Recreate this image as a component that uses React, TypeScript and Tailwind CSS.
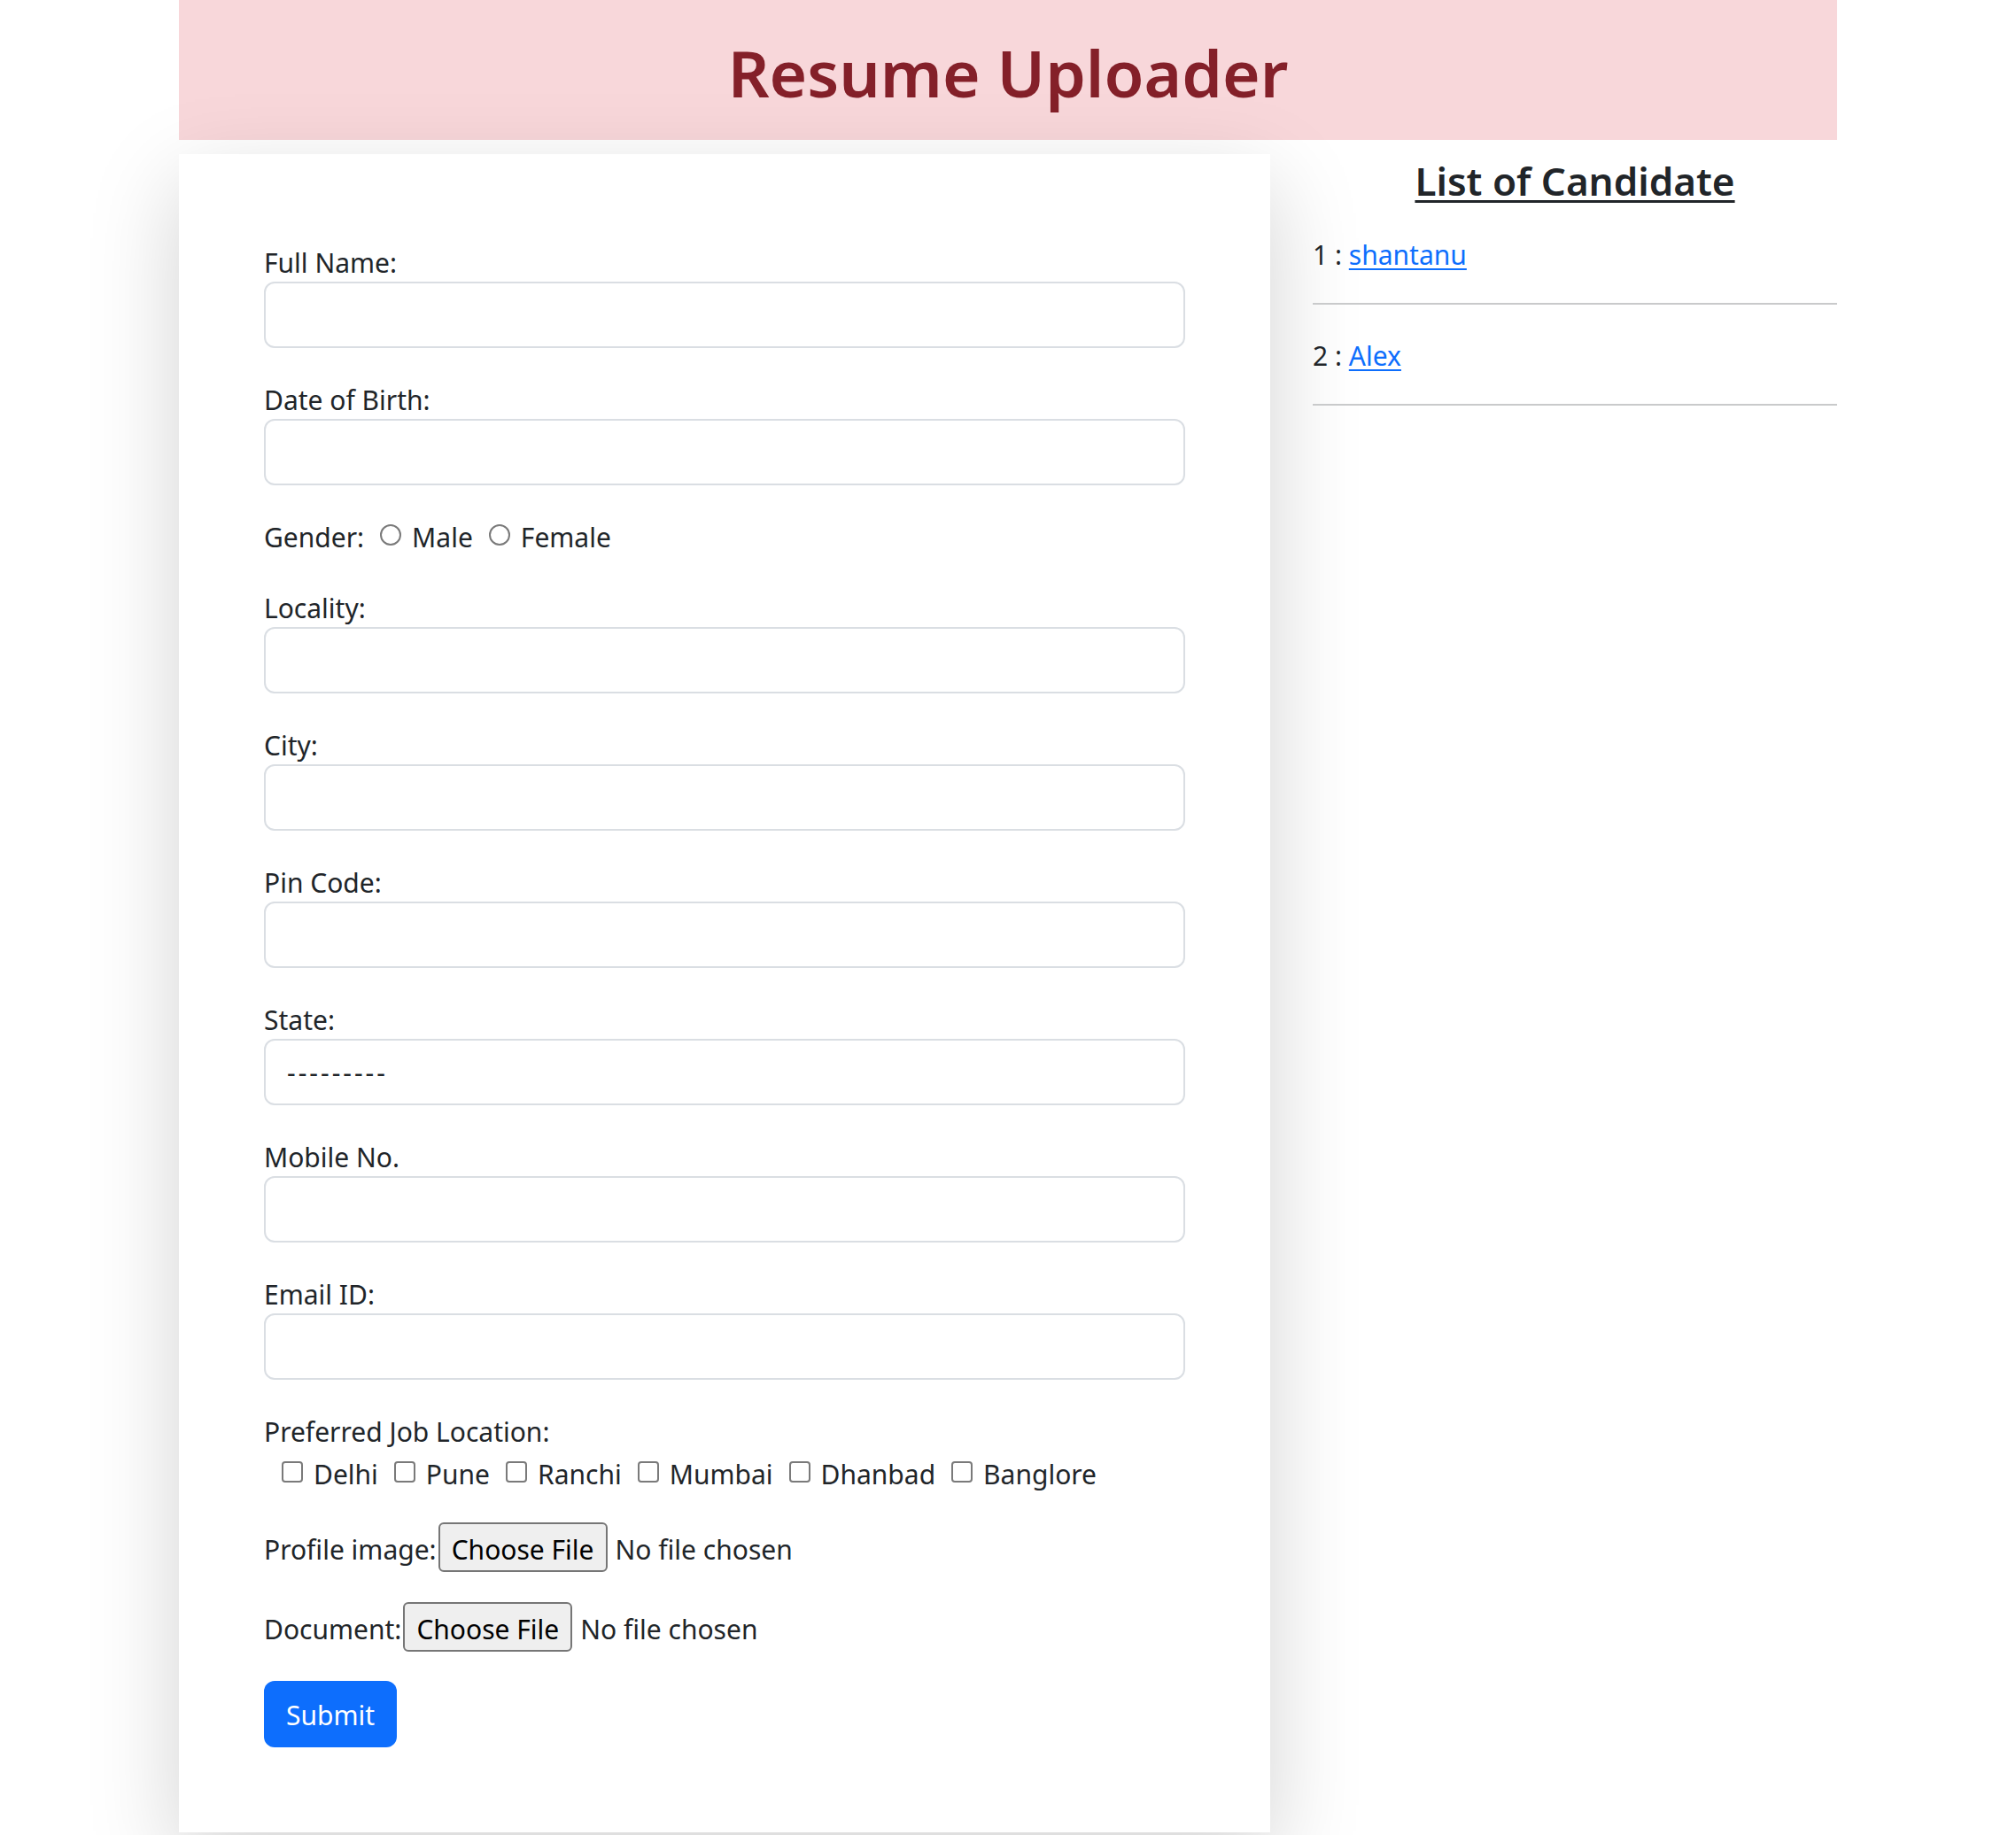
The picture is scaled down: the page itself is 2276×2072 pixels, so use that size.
import React from "react";

const T = "pt-[6px] leading-[42px]";

function TextInput() {
  return (
    <input
      type="text"
      className="block w-full h-[75px] rounded-[12px] border-2 border-[#dadee3] bg-white px-[24px] text-[30px] outline-none"
    />
  );
}

function Group({ label, children }: { label: string; children: React.ReactNode }) {
  return (
    <div className="mb-[32px]">
      <div className="pt-[6px] leading-[42px]">{label}</div>
      {children}
    </div>
  );
}

function Radio({ label }: { label: string }) {
  return (
    <div className="flex items-center ml-[18px]">
      <span className="block w-[24px] h-[24px] rounded-full border-2 border-[#7a7a7a] bg-white" />
      <span className="ml-[12px] pt-[6px] leading-[42px]">{label}</span>
    </div>
  );
}

function Check({ label, first }: { label: string; first?: boolean }) {
  return (
    <div className={first ? "flex items-center ml-[20px]" : "flex items-center ml-[18px]"}>
      <span className="block w-[24px] h-[24px] rounded-[4px] border-2 border-[#7a7a7a] bg-white" />
      <span className="ml-[12px] pt-[6px] leading-[42px]">{label}</span>
    </div>
  );
}

function FileRow({ label }: { label: string }) {
  return (
    <div className="flex items-center h-[58px] mb-[32px]">
      <span className="pt-[6px] leading-[42px]">{label}</span>
      <span className="ml-[2px] flex items-center h-[56px] pt-[6px] leading-[42px] px-[13px] rounded-[6px] border-2 border-[#767676] bg-[#efefef] text-black">
        Choose File
      </span>
      <span className="ml-[9px] pt-[6px] leading-[42px]">No file chosen</span>
    </div>
  );
}

export default function App() {
  return (
    <div className={"min-h-screen bg-white font-['Noto_Sans',sans-serif] text-[30px] leading-[48px] text-[#212529]"}>
      <div className="mx-auto w-[1920px] px-[24px]">
        <div className="h-[158px] bg-[#f8d7da] pt-[38px] text-center">
          <h1 className="text-[73px] leading-[87px] font-semibold text-[#842029]">Resume Uploader</h1>
        </div>
        <div className="flex gap-[48px]">
          <div className="w-[1232px] shrink-0 mt-[16px] bg-white p-[96px] shadow-[0_32px_96px_rgba(0,0,0,0.175)]">
            <Group label="Full Name:">
              <TextInput />
            </Group>
            <Group label="Date of Birth:">
              <TextInput />
            </Group>
            <div className="mb-[32px] flex items-center h-[48px]">
              <span className={T}>Gender:</span>
              <Radio label="Male" />
              <Radio label="Female" />
            </div>
            <Group label="Locality:">
              <TextInput />
            </Group>
            <Group label="City:">
              <TextInput />
            </Group>
            <Group label="Pin Code:">
              <TextInput />
            </Group>
            <Group label="State:">
              <select className="block w-full h-[75px] appearance-none rounded-[12px] border-2 border-[#dadee3] bg-white px-[24px] text-[30px] tracking-[3px] text-[#212529] outline-none">
                <option>---------</option>
              </select>
            </Group>
            <Group label="Mobile No.">
              <TextInput />
            </Group>
            <Group label="Email ID:">
              <TextInput />
            </Group>
            <div className="mb-[32px]">
              <div className="pt-[6px] leading-[42px]">Preferred Job Location:</div>
              <div className="flex items-center h-[48px]">
                <Check label="Delhi" first />
                <Check label="Pune" />
                <Check label="Ranchi" />
                <Check label="Mumbai" />
                <Check label="Dhanbad" />
                <Check label="Banglore" />
              </div>
            </div>
            <FileRow label="Profile image:" />
            <FileRow label="Document:" />
            <button className="flex items-center justify-center w-[150px] h-[75px] pt-[3px] rounded-[12px] bg-[#0d6efd] text-white">
              Submit
            </button>
          </div>
          <div className="w-[592px] shrink-0 pt-[18px]">
            <h4 className="text-center text-[44px] leading-[57.6px] font-semibold underline decoration-[3px] underline-offset-[5px] mb-[28px]">
              List of Candidate
            </h4>
            <div className="pt-[4px] leading-[44px]">
              1 : <a href="#" className="text-[#0d6efd] underline decoration-[2px] underline-offset-[4px]">shantanu</a>
            </div>
            <div className="my-[32px] h-[2px] bg-[#c9cacb]" />
            <div className="pt-[4px] leading-[44px]">
              2 : <a href="#" className="text-[#0d6efd] underline decoration-[2px] underline-offset-[4px]">Alex</a>
            </div>
            <div className="my-[32px] h-[2px] bg-[#c9cacb]" />
          </div>
        </div>
      </div>
    </div>
  );
}
